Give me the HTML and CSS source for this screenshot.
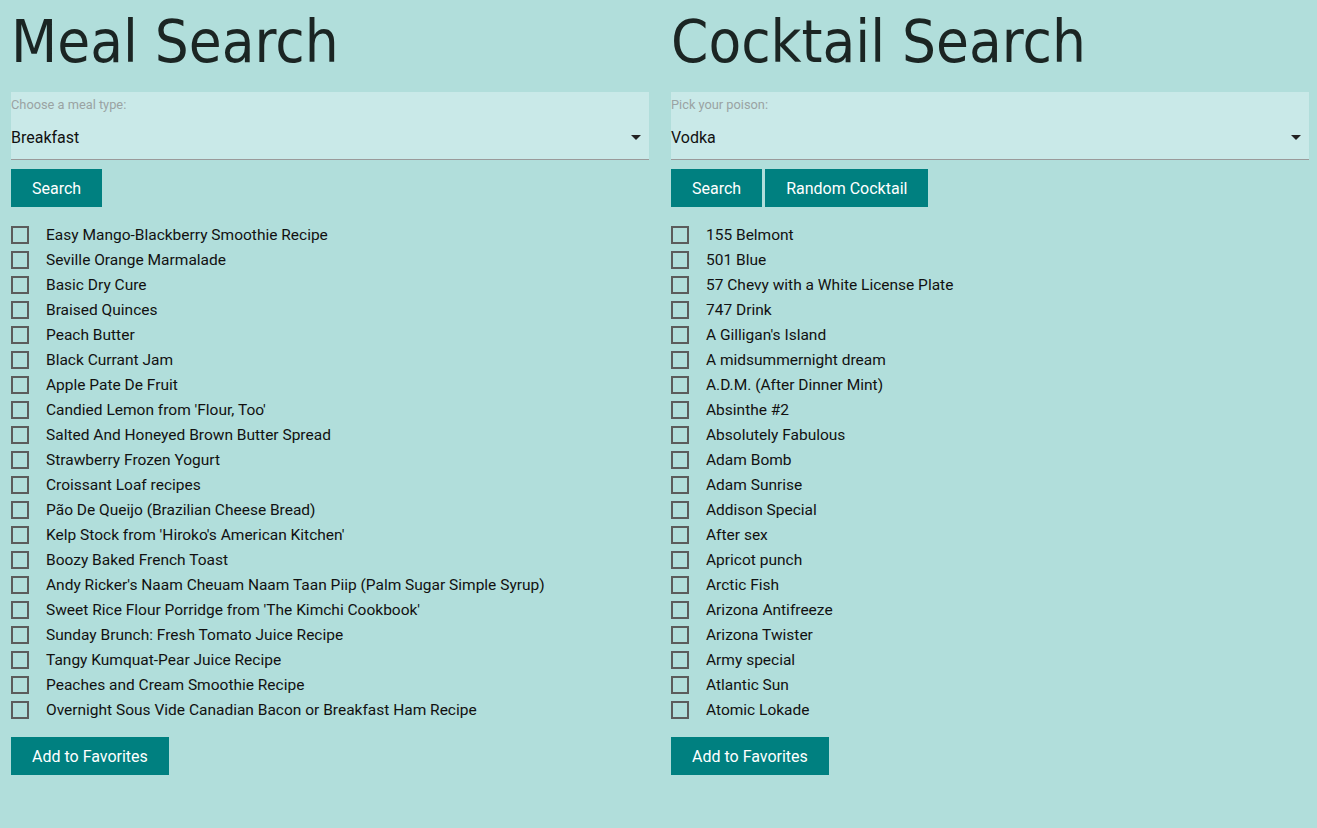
FILE: index.html
```html
<!DOCTYPE html>
<html>
<head>
<meta charset="utf-8">
<link rel="stylesheet" href="styles.css">
</head>
<body>
<div class="page">
  <section class="col">
    <h1 class="title">Meal Search</h1>
    <div class="select">
      <div class="select-label">Choose a meal type:</div>
      <div class="select-value">Breakfast</div>
      <span class="arrow"></span>
    </div>
    <div class="actions">
      <button class="btn">Search</button>
    </div>
    <ul class="list">
      <li><span class="box"></span>Easy Mango-Blackberry Smoothie Recipe</li>
      <li><span class="box"></span>Seville Orange Marmalade</li>
      <li><span class="box"></span>Basic Dry Cure</li>
      <li><span class="box"></span>Braised Quinces</li>
      <li><span class="box"></span>Peach Butter</li>
      <li><span class="box"></span>Black Currant Jam</li>
      <li><span class="box"></span>Apple Pate De Fruit</li>
      <li><span class="box"></span>Candied Lemon from 'Flour, Too'</li>
      <li><span class="box"></span>Salted And Honeyed Brown Butter Spread</li>
      <li><span class="box"></span>Strawberry Frozen Yogurt</li>
      <li><span class="box"></span>Croissant Loaf recipes</li>
      <li><span class="box"></span>Pão De Queijo (Brazilian Cheese Bread)</li>
      <li><span class="box"></span>Kelp Stock from 'Hiroko's American Kitchen'</li>
      <li><span class="box"></span>Boozy Baked French Toast</li>
      <li><span class="box"></span>Andy Ricker's Naam Cheuam Naam Taan Piip (Palm Sugar Simple Syrup)</li>
      <li><span class="box"></span>Sweet Rice Flour Porridge from 'The Kimchi Cookbook'</li>
      <li><span class="box"></span>Sunday Brunch: Fresh Tomato Juice Recipe</li>
      <li><span class="box"></span>Tangy Kumquat-Pear Juice Recipe</li>
      <li><span class="box"></span>Peaches and Cream Smoothie Recipe</li>
      <li><span class="box"></span>Overnight Sous Vide Canadian Bacon or Breakfast Ham Recipe</li>
    </ul>
    <div class="actions">
      <button class="btn">Add to Favorites</button>
    </div>
  </section>
  <section class="col">
    <h1 class="title">Cocktail Search</h1>
    <div class="select">
      <div class="select-label">Pick your poison:</div>
      <div class="select-value">Vodka</div>
      <span class="arrow"></span>
    </div>
    <div class="actions">
      <button class="btn">Search</button>
      <button class="btn">Random Cocktail</button>
    </div>
    <ul class="list">
      <li><span class="box"></span>155 Belmont</li>
      <li><span class="box"></span>501 Blue</li>
      <li><span class="box"></span>57 Chevy with a White License Plate</li>
      <li><span class="box"></span>747 Drink</li>
      <li><span class="box"></span>A Gilligan's Island</li>
      <li><span class="box"></span>A midsummernight dream</li>
      <li><span class="box"></span>A.D.M. (After Dinner Mint)</li>
      <li><span class="box"></span>Absinthe #2</li>
      <li><span class="box"></span>Absolutely Fabulous</li>
      <li><span class="box"></span>Adam Bomb</li>
      <li><span class="box"></span>Adam Sunrise</li>
      <li><span class="box"></span>Addison Special</li>
      <li><span class="box"></span>After sex</li>
      <li><span class="box"></span>Apricot punch</li>
      <li><span class="box"></span>Arctic Fish</li>
      <li><span class="box"></span>Arizona Antifreeze</li>
      <li><span class="box"></span>Arizona Twister</li>
      <li><span class="box"></span>Army special</li>
      <li><span class="box"></span>Atlantic Sun</li>
      <li><span class="box"></span>Atomic Lokade</li>
    </ul>
    <div class="actions">
      <button class="btn">Add to Favorites</button>
    </div>
  </section>
</div>
</body>
</html>
```
FILE: styles.css
```css
html, body {
  margin: 0;
  padding: 0;
  background: #b1dedb;
}
body {
  font-family: Roboto, "Liberation Sans", sans-serif;
  color: #111;
}
.page {
  display: grid;
  grid-template-columns: 1fr 1fr;
  column-gap: 22px;
  padding: 0 8px 0 11px;
}
.col {
  display: flex;
  flex-direction: column;
  align-items: flex-start;
}
.title {
  margin: 0;
  padding-top: 10px;
  height: 92px;
  box-sizing: border-box;
  font-family: "DejaVu Sans Condensed", "DejaVu Sans", sans-serif;
  font-stretch: semi-condensed;
  font-weight: normal;
  font-size: 59.5px;
  line-height: 64px;
  color: #1b2523;
}
.select {
  position: relative;
  align-self: stretch;
  height: 68px;
  box-sizing: border-box;
  background: #c9e9e8;
  border-bottom: 1px solid #9a9a9a;
}
.select-label {
  font-size: 12.8px;
  color: #9aa3a3;
  padding-top: 6px;
  line-height: 14px;
}
.select-value {
  font-size: 16px;
  line-height: 20px;
  margin-top: 16px;
  color: #111;
}
.arrow {
  position: absolute;
  right: 8px;
  top: 43px;
  width: 0;
  height: 0;
  border-left: 5px solid transparent;
  border-right: 5px solid transparent;
  border-top: 5px solid #222;
}
.actions {
  display: flex;
  gap: 3px;
  margin-top: 9px;
}
.btn {
  height: 38px;
  padding: 0 21px;
  border: none;
  background: #008080;
  color: #fff;
  font-family: Roboto, "Liberation Sans", sans-serif;
  font-size: 16px;
}
.list {
  list-style: none;
  margin: 15px 0 0;
  padding: 0;
}
.list li {
  display: flex;
  align-items: center;
  height: 25px;
  font-size: 15.5px;
  color: #111;
}
.box {
  width: 18px;
  height: 18px;
  box-sizing: border-box;
  border: 2px solid #5c5c5c;
  margin-right: 17px;
  flex-shrink: 0;
}
.list + .actions {
  margin-top: 15px;
}
```
